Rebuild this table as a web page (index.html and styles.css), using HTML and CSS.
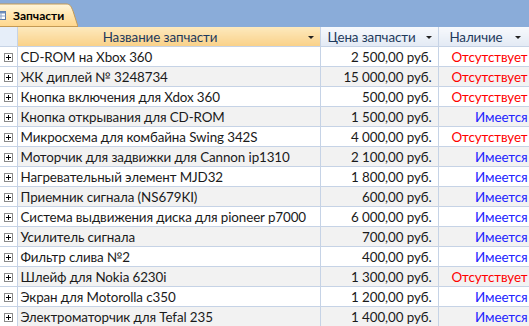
FILE: index.html
```html
<!DOCTYPE html>
<html lang="ru">
<head>
<meta charset="utf-8">
<link rel="stylesheet" href="styles.css">
</head>
<body>
<div class="tabstrip">
  <div class="tab">
    <svg class="tab-shape" width="86" height="24" viewBox="0 0 86 24">
      <defs>
        <linearGradient id="tg" x1="0" y1="0" x2="0" y2="1">
          <stop offset="0" stop-color="#fff6dc"/>
          <stop offset="0.5" stop-color="#ffe5ad"/>
          <stop offset="1" stop-color="#ffd68c"/>
        </linearGradient>
      </defs>
      <path d="M0 24 V1 H74 C78 1 79 3 81 8 L86 23.5 H0 Z" fill="url(#tg)" stroke="#c49a55" stroke-width="1"/>
    </svg>
    <svg class="tab-icon" width="10" height="9" viewBox="0 0 10 9">
      <rect x="0.5" y="0.5" width="9" height="8" fill="#ffffff" stroke="#5a7aa6"/>
      <rect x="0.5" y="0.5" width="9" height="2" fill="#6f8fbd"/>
      <line x1="0.5" y1="5" x2="9.5" y2="5" stroke="#8aa3c6"/>
      <line x1="5" y1="2" x2="5" y2="8.5" stroke="#8aa3c6"/>
    </svg>
    <span class="tab-label">Запчасти</span>
  </div>
</div>
<table class="grid">
  <colgroup>
    <col class="c-sel"><col class="c-name"><col class="c-price"><col class="c-avail">
  </colgroup>
  <thead>
    <tr>
      <th class="h-sel"></th>
      <th class="h-name active"><div class="h-cell"><span class="h-text">Название запчасти</span></div><span class="arrow"></span></th>
      <th class="h-price"><div class="h-cell"><span class="h-text">Цена запчасти</span></div><span class="arrow"></span></th>
      <th class="h-avail"><div class="h-cell"><span class="h-text">Наличие</span></div><span class="arrow"></span></th>
    </tr>
  </thead>
  <tbody>
    <tr><td class="sel"><span class="exp"></span></td><td class="name">CD-ROM на Xbox 360</td><td class="price">2 500,00 руб.</td><td class="avail no">Отсутствует</td></tr>
    <tr><td class="sel"><span class="exp"></span></td><td class="name">ЖК диплей № 3248734</td><td class="price">15 000,00 руб.</td><td class="avail no">Отсутствует</td></tr>
    <tr><td class="sel"><span class="exp"></span></td><td class="name">Кнопка включения для Xdox 360</td><td class="price">500,00 руб.</td><td class="avail no">Отсутствует</td></tr>
    <tr><td class="sel"><span class="exp"></span></td><td class="name">Кнопка открывания для CD-ROM</td><td class="price">1 500,00 руб.</td><td class="avail yes">Имеется</td></tr>
    <tr><td class="sel"><span class="exp"></span></td><td class="name">Микросхема для комбайна Swing 342S</td><td class="price">4 000,00 руб.</td><td class="avail no">Отсутствует</td></tr>
    <tr><td class="sel"><span class="exp"></span></td><td class="name">Моторчик для задвижки для Cannon ip1310</td><td class="price">2 100,00 руб.</td><td class="avail yes">Имеется</td></tr>
    <tr><td class="sel"><span class="exp"></span></td><td class="name">Нагревательный элемент MJD32</td><td class="price">1 800,00 руб.</td><td class="avail yes">Имеется</td></tr>
    <tr><td class="sel"><span class="exp"></span></td><td class="name">Приемник сигнала (NS679KI)</td><td class="price">600,00 руб.</td><td class="avail yes">Имеется</td></tr>
    <tr><td class="sel"><span class="exp"></span></td><td class="name">Система выдвижения диска для pioneer p7000</td><td class="price">6 000,00 руб.</td><td class="avail yes">Имеется</td></tr>
    <tr><td class="sel"><span class="exp"></span></td><td class="name">Усилитель сигнала</td><td class="price">700,00 руб.</td><td class="avail yes">Имеется</td></tr>
    <tr><td class="sel"><span class="exp"></span></td><td class="name">Фильтр слива №2</td><td class="price">400,00 руб.</td><td class="avail yes">Имеется</td></tr>
    <tr><td class="sel"><span class="exp"></span></td><td class="name">Шлейф для Nokia 6230i</td><td class="price">1 300,00 руб.</td><td class="avail no">Отсутствует</td></tr>
    <tr><td class="sel"><span class="exp"></span></td><td class="name">Экран для Motorolla c350</td><td class="price">1 200,00 руб.</td><td class="avail yes">Имеется</td></tr>
    <tr><td class="sel"><span class="exp"></span></td><td class="name">Электроматорчик для Tefal 235</td><td class="price">1 400,00 руб.</td><td class="avail yes">Имеется</td></tr>
  </tbody>
</table>
</body>
</html>
```
FILE: styles.css
```css
html, body {
  margin: 0;
  padding: 0;
  width: 529px;
  height: 326px;
  overflow: hidden;
  background: #ffffff;
  font-family: Lato, "Open Sans", sans-serif;
}

.tabstrip {
  height: 27px;
  background: #8aacd9;
  display: flex;
  align-items: flex-end;
}

.tab {
  position: relative;
  width: 78px;
  height: 24px;
  margin-left: -8px;
  display: flex;
  align-items: center;
  gap: 4px;
  padding-left: 4px;
  box-sizing: border-box;
}

.tab-shape {
  position: absolute;
  left: 0;
  top: 0;
}

.tab-icon, .tab-label {
  position: relative;
}

.tab-label {
  font-weight: bold;
  font-size: 12px;
  color: #000;
  margin-left: 3px;
}

.grid {
  border-collapse: collapse;
  table-layout: fixed;
  width: 539px;
  font-size: 13.4px;
  letter-spacing: -0.1px;
}

.c-sel { width: 17px; }
.c-name { width: 303px; }
.c-price { width: 118px; }
.c-avail { width: 101px; }

th, td {
  height: 19px;
  padding: 0;
  border: 1px solid #c6d3e6;
  white-space: nowrap;
  overflow: hidden;
  box-sizing: content-box;
}

th {
  border-top: none;
  font-weight: normal;
  color: #1e3a5c;
  background: linear-gradient(#f7f9fc, #e3eaf4);
  position: relative;
  text-align: left;
}

th.h-sel {
  border-left: none;
  background: #e6eef9;
}

th.active {
  background: linear-gradient(#fde9bd, #f9d189);
}

.h-cell {
  display: flex;
  justify-content: center;
  align-items: center;
  height: 19px;
}
.h-name .h-cell { padding-right: 17px; }
.h-price .h-cell { padding-right: 15px; }
.h-avail .h-cell { padding-right: 25px; }

.arrow {
  position: absolute;
  top: 9px;
  width: 0;
  height: 0;
  border-left: 3px solid transparent;
  border-right: 3px solid transparent;
  border-top: 3px solid #222222;
}
.h-name .arrow { left: 290px; }
.h-price .arrow { left: 105px; }
.h-avail .arrow { left: 76px; }

tbody tr:nth-child(even) td { background: #f2f2f2; }
tbody tr:nth-child(even) td.sel { background: #ffffff; }

td.sel {
  border-left: none;
  text-align: center;
  vertical-align: middle;
}

.exp {
  display: inline-block;
  width: 9px;
  height: 9px;
  box-sizing: border-box;
  border: 1px solid #8a8a8a;
  background:
    linear-gradient(#000, #000) center / 5px 1px no-repeat,
    linear-gradient(#000, #000) center / 1px 5px no-repeat,
    #ffffff;
  vertical-align: middle;
  margin-top: -2px;
}

td.name {
  padding-left: 3px;
  color: #1a1a1a;
}

td.price {
  text-align: right;
  padding-right: 6px;
  color: #1a1a1a;
}

td.avail {
  text-align: right;
  padding-right: 11px;
}
td.no { color: #ff0000; }
td.yes { color: #2222ff; }
```
